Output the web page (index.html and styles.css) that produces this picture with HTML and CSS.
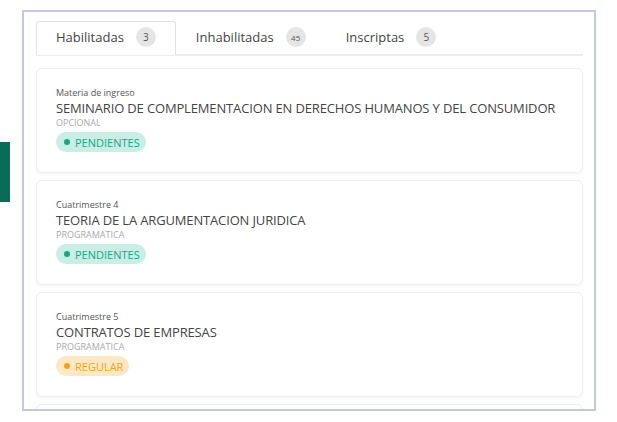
FILE: index.html
```
<!DOCTYPE html>
<html lang="es">
<head>
    <meta charset="UTF-8">
    <meta name="viewport" content="width=device-width, initial-scale=1.0">
    <title>Materias</title>
    <link rel="stylesheet" href="styles.css">
</head>
<body>
    <div class="side-handle"></div>

    <div class="panel">
        <div class="tab">
            <button class="tablinks active">Habilitadas <span class="count">3</span></button>
            <button class="tablinks">Inhabilitadas <span class="count small">45</span></button>
            <button class="tablinks">Inscriptas <span class="count">5</span></button>
        </div>

        <div class="list">
            <div class="card">
                <div class="card-label">Materia de ingreso</div>
                <div class="card-title">SEMINARIO DE COMPLEMENTACION EN DERECHOS HUMANOS Y DEL CONSUMIDOR</div>
                <div class="card-type">OPCIONAL</div>
                <span class="status pending"><i class="dot"></i>PENDIENTES</span>
            </div>
            <div class="card">
                <div class="card-label">Cuatrimestre 4</div>
                <div class="card-title">TEORIA DE LA ARGUMENTACION JURIDICA</div>
                <div class="card-type">PROGRAMATICA</div>
                <span class="status pending"><i class="dot"></i>PENDIENTES</span>
            </div>
            <div class="card">
                <div class="card-label">Cuatrimestre 5</div>
                <div class="card-title">CONTRATOS DE EMPRESAS</div>
                <div class="card-type">PROGRAMATICA</div>
                <span class="status regular"><i class="dot"></i>REGULAR</span>
            </div>
            <!-- next card, scrolled below the fold -->
            <div class="card"></div>
        </div>
    </div>
</body>
</html>
```
FILE: styles.css
```
body {
margin: 0;
font-family: "Open Sans", "Liberation Sans", sans-serif;
color: #444;
background: #fff;
}

/* green handle on the left edge */
.side-handle {
position: absolute;
left: 0;
top: 142px;
width: 10px;
height: 60px;
background-color: #0b6b59;
}

.panel {
margin: 10px 0 0 22px;
width: 574px;
height: 401px;
border: 2px solid #c3c7e3;
padding: 9px 11px 0 12px;
box-sizing: border-box;
overflow: hidden;
}

/* Style the tab */
.tab {
display: flex;
border-bottom: 2px solid #eeeeee;
height: 33px;
}

.tab button {
background-color: inherit;
border: 1px solid transparent;
border-bottom: none;
border-radius: 3px 3px 0 0;
font-family: inherit;
font-size: 13px;
color: #444;
padding: 0 19px 3px 19px;
display: flex;
align-items: center;
gap: 12px;
cursor: pointer;
height: 34px;
margin-bottom: -2px;
}

.tab button.active {
border-color: #e2e2e2;
background-color: #fff;
}

.count {
display: inline-flex;
align-items: center;
justify-content: center;
width: 20px;
height: 20px;
border-radius: 50%;
background-color: #e5e5e5;
font-size: 10px;
color: #555;
}

.count.small {
font-size: 8px;
}

.list {
display: flex;
flex-direction: column;
gap: 7px;
margin-top: 12px;
}

.card {
border: 1px solid #efefef;
border-radius: 6px;
box-shadow: 0 1px 3px rgba(0, 0, 0, 0.05);
padding: 18px 19px 0 19px;
height: 105px;
box-sizing: border-box;
flex-shrink: 0;
}

.card-label {
font-size: 9px;
color: #555;
line-height: 12px;
}

.card-title {
font-size: 13px;
letter-spacing: -0.15px;
color: #444;
line-height: 18px;
white-space: nowrap;
}

.card-type {
font-size: 9px;
color: #aaa;
line-height: 12px;
margin-bottom: 3px;
}

.status {
display: flex;
width: fit-content;
align-items: center;
height: 20px;
padding: 0 6px 0 8px;
border-radius: 10px;
font-size: 11px;
gap: 5px;
}

.status .dot {
width: 6px;
height: 6px;
border-radius: 50%;
background-color: currentColor;
}

.status.pending {
background-color: #c9eee5;
color: #19a487;
}

.status.regular {
background-color: #fde8c6;
color: #f3a21c;
}
```
